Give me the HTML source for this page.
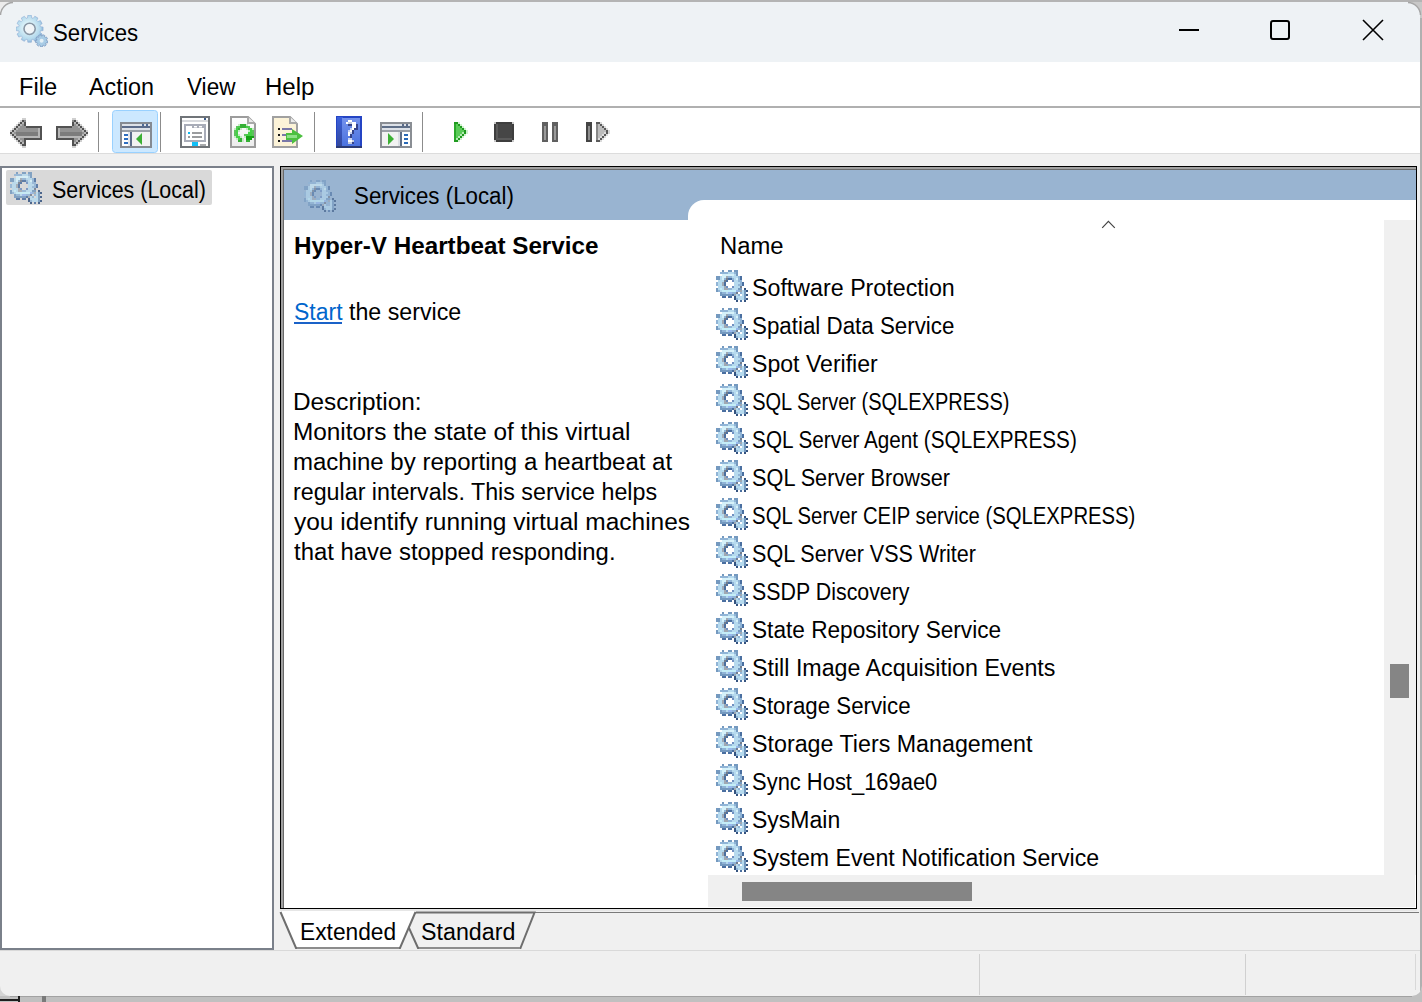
<!DOCTYPE html>
<html><head><meta charset="utf-8"><title>Services</title>
<style>
html,body{margin:0;padding:0;}
body{width:1422px;height:1002px;overflow:hidden;position:relative;background:#c0c0c0;font-family:"Liberation Sans", sans-serif;}
.t{position:absolute;white-space:nowrap;font-family:"Liberation Sans", sans-serif;}
.ic{position:absolute;display:block;}
.a{position:absolute;}
</style></head><body>
<svg width="0" height="0" style="position:absolute"><defs><symbol id="gear" viewBox="0 0 16 16"><rect x="3" y="0" width="1" height="1" fill="#7499bf"/><rect x="6" y="0" width="2" height="1" fill="#7499bf"/><rect x="9" y="0" width="2" height="1" fill="#7499bf"/><rect x="2" y="1" width="4" height="1" fill="#90b4d6"/><rect x="6" y="1" width="3" height="1" fill="#b6daee"/><rect x="9" y="1" width="1" height="1" fill="#90b4d6"/><rect x="10" y="1" width="1" height="1" fill="#7499bf"/><rect x="3" y="2" width="6" height="1" fill="#d6f2fa"/><rect x="9" y="2" width="1" height="1" fill="#b6daee"/><rect x="10" y="2" width="1" height="1" fill="#7499bf"/><rect x="0" y="3" width="2" height="1" fill="#7499bf"/><rect x="2" y="3" width="1" height="1" fill="#b6daee"/><rect x="3" y="3" width="2" height="1" fill="#d6f2fa"/><rect x="5" y="3" width="1" height="1" fill="#a0a8b2"/><rect x="6" y="3" width="2" height="1" fill="#90b4d6"/><rect x="8" y="3" width="3" height="1" fill="#b6daee"/><rect x="11" y="3" width="1" height="1" fill="#90b4d6"/><rect x="12" y="3" width="1" height="1" fill="#4a6fa0"/><rect x="0" y="4" width="2" height="1" fill="#7499bf"/><rect x="2" y="4" width="1" height="1" fill="#b6daee"/><rect x="3" y="4" width="1" height="1" fill="#d6f2fa"/><rect x="4" y="4" width="1" height="1" fill="#90b4d6"/><rect x="5" y="4" width="1" height="1" fill="#737d8c"/><rect x="6" y="4" width="2" height="1" fill="#4a6fa0"/><rect x="8" y="4" width="1" height="1" fill="#90b4d6"/><rect x="9" y="4" width="1" height="1" fill="#b6daee"/><rect x="10" y="4" width="1" height="1" fill="#d6f2fa"/><rect x="11" y="4" width="1" height="1" fill="#90b4d6"/><rect x="12" y="4" width="1" height="1" fill="#4a6fa0"/><rect x="1" y="5" width="3" height="1" fill="#b6daee"/><rect x="4" y="5" width="1" height="1" fill="#737d8c"/><rect x="5" y="5" width="1" height="1" fill="#4a6fa0"/><rect x="6" y="5" width="2" height="1" fill="#ffffff"/><rect x="8" y="5" width="1" height="1" fill="#6f8fc0"/><rect x="9" y="5" width="2" height="1" fill="#b6daee"/><rect x="11" y="5" width="2" height="1" fill="#90b4d6"/><rect x="0" y="6" width="1" height="1" fill="#90b4d6"/><rect x="1" y="6" width="2" height="1" fill="#b6daee"/><rect x="3" y="6" width="1" height="1" fill="#a0a8b2"/><rect x="4" y="6" width="1" height="1" fill="#4a6fa0"/><rect x="5" y="6" width="4" height="1" fill="#ffffff"/><rect x="9" y="6" width="3" height="1" fill="#b6daee"/><rect x="12" y="6" width="1" height="1" fill="#90b4d6"/><rect x="13" y="6" width="1" height="1" fill="#4a6fa0"/><rect x="0" y="7" width="1" height="1" fill="#90b4d6"/><rect x="1" y="7" width="2" height="1" fill="#b6daee"/><rect x="3" y="7" width="1" height="1" fill="#a0a8b2"/><rect x="4" y="7" width="1" height="1" fill="#4a6fa0"/><rect x="5" y="7" width="4" height="1" fill="#ffffff"/><rect x="9" y="7" width="2" height="1" fill="#b6daee"/><rect x="11" y="7" width="2" height="1" fill="#90b4d6"/><rect x="13" y="7" width="1" height="1" fill="#4a6fa0"/><rect x="1" y="8" width="3" height="1" fill="#b6daee"/><rect x="4" y="8" width="1" height="1" fill="#a0a8b2"/><rect x="5" y="8" width="1" height="1" fill="#6f8fc0"/><rect x="6" y="8" width="2" height="1" fill="#ffffff"/><rect x="8" y="8" width="1" height="1" fill="#6f8fc0"/><rect x="9" y="8" width="3" height="1" fill="#b6daee"/><rect x="12" y="8" width="1" height="1" fill="#737d8c"/><rect x="0" y="9" width="1" height="1" fill="#7499bf"/><rect x="1" y="9" width="1" height="1" fill="#b6daee"/><rect x="2" y="9" width="1" height="1" fill="#c4eef8"/><rect x="3" y="9" width="1" height="1" fill="#b6daee"/><rect x="4" y="9" width="2" height="1" fill="#a0a8b2"/><rect x="6" y="9" width="2" height="1" fill="#90b4d6"/><rect x="8" y="9" width="3" height="1" fill="#b6daee"/><rect x="11" y="9" width="2" height="1" fill="#7499bf"/><rect x="14" y="9" width="1" height="1" fill="#34537f"/><rect x="0" y="10" width="1" height="1" fill="#7499bf"/><rect x="1" y="10" width="1" height="1" fill="#90b4d6"/><rect x="2" y="10" width="1" height="1" fill="#b6daee"/><rect x="3" y="10" width="7" height="1" fill="#c4eef8"/><rect x="10" y="10" width="1" height="1" fill="#98b8ee"/><rect x="11" y="10" width="1" height="1" fill="#90b4d6"/><rect x="12" y="10" width="1" height="1" fill="#a0a8b2"/><rect x="13" y="10" width="1" height="1" fill="#b6daee"/><rect x="14" y="10" width="1" height="1" fill="#7499bf"/><rect x="15" y="10" width="1" height="1" fill="#34537f"/><rect x="2" y="11" width="1" height="1" fill="#7499bf"/><rect x="3" y="11" width="2" height="1" fill="#90b4d6"/><rect x="5" y="11" width="1" height="1" fill="#b6daee"/><rect x="6" y="11" width="2" height="1" fill="#98b8ee"/><rect x="8" y="11" width="2" height="1" fill="#90b4d6"/><rect x="10" y="11" width="1" height="1" fill="#737d8c"/><rect x="11" y="11" width="1" height="1" fill="#ffffff"/><rect x="12" y="11" width="1" height="1" fill="#90b4d6"/><rect x="13" y="11" width="1" height="1" fill="#b6daee"/><rect x="14" y="11" width="1" height="1" fill="#7499bf"/><rect x="2" y="12" width="6" height="1" fill="#7499bf"/><rect x="8" y="12" width="1" height="1" fill="#4a6fa0"/><rect x="9" y="12" width="1" height="1" fill="#a0a8b2"/><rect x="10" y="12" width="1" height="1" fill="#b6daee"/><rect x="11" y="12" width="1" height="1" fill="#90b4d6"/><rect x="12" y="12" width="1" height="1" fill="#ffffff"/><rect x="13" y="12" width="1" height="1" fill="#b6daee"/><rect x="14" y="12" width="1" height="1" fill="#7499bf"/><rect x="15" y="12" width="1" height="1" fill="#34537f"/><rect x="3" y="13" width="2" height="1" fill="#4a6fa0"/><rect x="6" y="13" width="2" height="1" fill="#4a6fa0"/><rect x="9" y="13" width="1" height="1" fill="#34537f"/><rect x="10" y="13" width="4" height="1" fill="#b6daee"/><rect x="14" y="13" width="1" height="1" fill="#7499bf"/><rect x="9" y="14" width="1" height="1" fill="#34537f"/><rect x="10" y="14" width="1" height="1" fill="#90b4d6"/><rect x="11" y="14" width="3" height="1" fill="#b6daee"/><rect x="14" y="14" width="1" height="1" fill="#7499bf"/><rect x="15" y="14" width="1" height="1" fill="#34537f"/><rect x="10" y="15" width="1" height="1" fill="#34537f"/><rect x="12" y="15" width="1" height="1" fill="#4a6fa0"/><rect x="14" y="15" width="1" height="1" fill="#34537f"/></symbol><symbol id="gearT" viewBox="0 0 16 16"><rect x="3" y="0" width="1" height="1" fill="#7499bf"/><rect x="6" y="0" width="2" height="1" fill="#7499bf"/><rect x="9" y="0" width="2" height="1" fill="#7499bf"/><rect x="2" y="1" width="4" height="1" fill="#90b4d6"/><rect x="6" y="1" width="3" height="1" fill="#b6daee"/><rect x="9" y="1" width="1" height="1" fill="#90b4d6"/><rect x="10" y="1" width="1" height="1" fill="#7499bf"/><rect x="3" y="2" width="6" height="1" fill="#d6f2fa"/><rect x="9" y="2" width="1" height="1" fill="#b6daee"/><rect x="10" y="2" width="1" height="1" fill="#7499bf"/><rect x="0" y="3" width="2" height="1" fill="#7499bf"/><rect x="2" y="3" width="1" height="1" fill="#b6daee"/><rect x="3" y="3" width="2" height="1" fill="#d6f2fa"/><rect x="5" y="3" width="1" height="1" fill="#a0a8b2"/><rect x="6" y="3" width="2" height="1" fill="#90b4d6"/><rect x="8" y="3" width="3" height="1" fill="#b6daee"/><rect x="11" y="3" width="1" height="1" fill="#90b4d6"/><rect x="12" y="3" width="1" height="1" fill="#4a6fa0"/><rect x="0" y="4" width="2" height="1" fill="#7499bf"/><rect x="2" y="4" width="1" height="1" fill="#b6daee"/><rect x="3" y="4" width="1" height="1" fill="#d6f2fa"/><rect x="4" y="4" width="1" height="1" fill="#90b4d6"/><rect x="5" y="4" width="1" height="1" fill="#737d8c"/><rect x="6" y="4" width="2" height="1" fill="#4a6fa0"/><rect x="8" y="4" width="1" height="1" fill="#90b4d6"/><rect x="9" y="4" width="1" height="1" fill="#b6daee"/><rect x="10" y="4" width="1" height="1" fill="#d6f2fa"/><rect x="11" y="4" width="1" height="1" fill="#90b4d6"/><rect x="12" y="4" width="1" height="1" fill="#4a6fa0"/><rect x="1" y="5" width="3" height="1" fill="#b6daee"/><rect x="4" y="5" width="1" height="1" fill="#737d8c"/><rect x="5" y="5" width="1" height="1" fill="#4a6fa0"/><rect x="8" y="5" width="1" height="1" fill="#6f8fc0"/><rect x="9" y="5" width="2" height="1" fill="#b6daee"/><rect x="11" y="5" width="2" height="1" fill="#90b4d6"/><rect x="0" y="6" width="1" height="1" fill="#90b4d6"/><rect x="1" y="6" width="2" height="1" fill="#b6daee"/><rect x="3" y="6" width="1" height="1" fill="#a0a8b2"/><rect x="4" y="6" width="1" height="1" fill="#4a6fa0"/><rect x="9" y="6" width="3" height="1" fill="#b6daee"/><rect x="12" y="6" width="1" height="1" fill="#90b4d6"/><rect x="13" y="6" width="1" height="1" fill="#4a6fa0"/><rect x="0" y="7" width="1" height="1" fill="#90b4d6"/><rect x="1" y="7" width="2" height="1" fill="#b6daee"/><rect x="3" y="7" width="1" height="1" fill="#a0a8b2"/><rect x="4" y="7" width="1" height="1" fill="#4a6fa0"/><rect x="9" y="7" width="2" height="1" fill="#b6daee"/><rect x="11" y="7" width="2" height="1" fill="#90b4d6"/><rect x="13" y="7" width="1" height="1" fill="#4a6fa0"/><rect x="1" y="8" width="3" height="1" fill="#b6daee"/><rect x="4" y="8" width="1" height="1" fill="#a0a8b2"/><rect x="5" y="8" width="1" height="1" fill="#6f8fc0"/><rect x="8" y="8" width="1" height="1" fill="#6f8fc0"/><rect x="9" y="8" width="3" height="1" fill="#b6daee"/><rect x="12" y="8" width="1" height="1" fill="#737d8c"/><rect x="0" y="9" width="1" height="1" fill="#7499bf"/><rect x="1" y="9" width="1" height="1" fill="#b6daee"/><rect x="2" y="9" width="1" height="1" fill="#c4eef8"/><rect x="3" y="9" width="1" height="1" fill="#b6daee"/><rect x="4" y="9" width="2" height="1" fill="#a0a8b2"/><rect x="6" y="9" width="2" height="1" fill="#90b4d6"/><rect x="8" y="9" width="3" height="1" fill="#b6daee"/><rect x="11" y="9" width="2" height="1" fill="#7499bf"/><rect x="14" y="9" width="1" height="1" fill="#34537f"/><rect x="0" y="10" width="1" height="1" fill="#7499bf"/><rect x="1" y="10" width="1" height="1" fill="#90b4d6"/><rect x="2" y="10" width="1" height="1" fill="#b6daee"/><rect x="3" y="10" width="7" height="1" fill="#c4eef8"/><rect x="10" y="10" width="1" height="1" fill="#98b8ee"/><rect x="11" y="10" width="1" height="1" fill="#90b4d6"/><rect x="12" y="10" width="1" height="1" fill="#a0a8b2"/><rect x="13" y="10" width="1" height="1" fill="#b6daee"/><rect x="14" y="10" width="1" height="1" fill="#7499bf"/><rect x="15" y="10" width="1" height="1" fill="#34537f"/><rect x="2" y="11" width="1" height="1" fill="#7499bf"/><rect x="3" y="11" width="2" height="1" fill="#90b4d6"/><rect x="5" y="11" width="1" height="1" fill="#b6daee"/><rect x="6" y="11" width="2" height="1" fill="#98b8ee"/><rect x="8" y="11" width="2" height="1" fill="#90b4d6"/><rect x="10" y="11" width="1" height="1" fill="#737d8c"/><rect x="12" y="11" width="1" height="1" fill="#90b4d6"/><rect x="13" y="11" width="1" height="1" fill="#b6daee"/><rect x="14" y="11" width="1" height="1" fill="#7499bf"/><rect x="2" y="12" width="6" height="1" fill="#7499bf"/><rect x="8" y="12" width="1" height="1" fill="#4a6fa0"/><rect x="9" y="12" width="1" height="1" fill="#a0a8b2"/><rect x="10" y="12" width="1" height="1" fill="#b6daee"/><rect x="11" y="12" width="1" height="1" fill="#90b4d6"/><rect x="13" y="12" width="1" height="1" fill="#b6daee"/><rect x="14" y="12" width="1" height="1" fill="#7499bf"/><rect x="15" y="12" width="1" height="1" fill="#34537f"/><rect x="3" y="13" width="2" height="1" fill="#4a6fa0"/><rect x="6" y="13" width="2" height="1" fill="#4a6fa0"/><rect x="9" y="13" width="1" height="1" fill="#34537f"/><rect x="10" y="13" width="4" height="1" fill="#b6daee"/><rect x="14" y="13" width="1" height="1" fill="#7499bf"/><rect x="9" y="14" width="1" height="1" fill="#34537f"/><rect x="10" y="14" width="1" height="1" fill="#90b4d6"/><rect x="11" y="14" width="3" height="1" fill="#b6daee"/><rect x="14" y="14" width="1" height="1" fill="#7499bf"/><rect x="15" y="14" width="1" height="1" fill="#34537f"/><rect x="10" y="15" width="1" height="1" fill="#34537f"/><rect x="12" y="15" width="1" height="1" fill="#4a6fa0"/><rect x="14" y="15" width="1" height="1" fill="#34537f"/></symbol></defs></svg>
<div class="a" style="left:0;top:0;width:1422px;height:2px;background:#b4b4b4"></div>
<div class="a" style="left:0;top:984px;width:14px;height:12px;background:#d4d4d4"></div>
<div class="a" style="left:0;top:999px;width:20px;height:2px;background:#1e1e1e"></div>
<div class="a" style="left:10px;top:996px;width:1402px;height:1px;background:#a2a2a2"></div>
<div class="a" style="left:18px;top:996px;width:2px;height:6px;background:#1e1e1e"></div>
<div class="a" style="left:42px;top:996px;width:4px;height:6px;background:#7a7a7a"></div>
<!-- window -->
<div class="a" style="left:0;top:2px;width:1422px;height:994px;background:#f0f0f0;border-radius:12px 12px 10px 10px;overflow:hidden;">
  <div class="a" style="left:1420px;top:0;width:2px;height:994px;background:#b0b0b0"></div>
</div>
<!-- title bar -->
<div class="a" style="left:0;top:2px;width:16px;height:16px;background:#ececec"></div>
<div class="a" style="left:1405px;top:2px;width:17px;height:16px;background:#c8c8c8"></div>
<div class="a" style="left:0;top:2px;width:1420px;height:60px;background:#eef2f5;border-top-left-radius:12px;border-top-right-radius:12px;"></div>
<svg class="a" style="left:0;top:0" width="1422" height="20"><path d="M0.5,15 A13,13 0 0 1 13,2.5" fill="none" stroke="#a6a6a6" stroke-width="1.5"/><path d="M1408,2.5 A13,13 0 0 1 1420.5,15" fill="none" stroke="#a6a6a6" stroke-width="1.5"/></svg>
<!-- menu -->
<div class="a" style="left:0;top:62px;width:1420px;height:44px;background:#fff"></div>
<div class="a" style="left:0;top:106px;width:1420px;height:2px;background:#b0b0b0"></div>
<!-- toolbar -->
<div class="a" style="left:0;top:108px;width:1420px;height:45px;background:#fff"></div>
<div class="a" style="left:0;top:153px;width:1420px;height:1px;background:#dcdcdc"></div>
<svg class="a" style="left:0;top:0" width="640" height="160" viewBox="0 0 640 160"><defs><linearGradient id="agL" x1="0" y1="0" x2="0" y2="1"><stop offset="0" stop-color="#a4a4a4"/><stop offset=".55" stop-color="#828282"/><stop offset=".8" stop-color="#b8b8b8"/><stop offset="1" stop-color="#9a9a9a"/></linearGradient><linearGradient id="pg" x1="0" y1="0" x2="0" y2="1"><stop offset="0" stop-color="#ffffff"/><stop offset="1" stop-color="#ececec"/></linearGradient><linearGradient id="hb" x1="0" y1="0" x2="1" y2="0"><stop offset="0" stop-color="#3f63d8"/><stop offset="1" stop-color="#2b3f90"/></linearGradient></defs><g shape-rendering="crispEdges"><rect x="22" y="118" width="4" height="2" fill="#cfcfcf"/><rect x="20" y="120" width="2" height="2" fill="#cfcfcf"/><rect x="22" y="120" width="2" height="2" fill="#525252"/><rect x="24" y="120" width="2" height="2" fill="#8a8a8a"/><rect x="18" y="122" width="2" height="2" fill="#cfcfcf"/><rect x="20" y="122" width="2" height="2" fill="#525252"/><rect x="22" y="122" width="2" height="2" fill="#b6b6b6"/><rect x="24" y="122" width="2" height="2" fill="#525252"/><rect x="16" y="124" width="2" height="2" fill="#cfcfcf"/><rect x="18" y="124" width="2" height="2" fill="#525252"/><rect x="20" y="124" width="2" height="2" fill="#b6b6b6"/><rect x="22" y="124" width="2" height="2" fill="#939393"/><rect x="24" y="124" width="2" height="2" fill="#525252"/><rect x="14" y="126" width="2" height="2" fill="#cfcfcf"/><rect x="16" y="126" width="2" height="2" fill="#525252"/><rect x="18" y="126" width="2" height="2" fill="#b6b6b6"/><rect x="20" y="126" width="6" height="2" fill="#939393"/><rect x="26" y="126" width="16" height="2" fill="#525252"/><rect x="12" y="128" width="2" height="2" fill="#cfcfcf"/><rect x="14" y="128" width="2" height="2" fill="#525252"/><rect x="16" y="128" width="2" height="2" fill="#b6b6b6"/><rect x="18" y="128" width="20" height="2" fill="#939393"/><rect x="38" y="128" width="2" height="2" fill="#b6b6b6"/><rect x="40" y="128" width="2" height="2" fill="#525252"/><rect x="10" y="130" width="2" height="2" fill="#cfcfcf"/><rect x="12" y="130" width="2" height="2" fill="#525252"/><rect x="14" y="130" width="2" height="2" fill="#b6b6b6"/><rect x="16" y="130" width="22" height="2" fill="#939393"/><rect x="38" y="130" width="2" height="2" fill="#b6b6b6"/><rect x="40" y="130" width="2" height="2" fill="#525252"/><rect x="10" y="132" width="2" height="2" fill="#525252"/><rect x="12" y="132" width="2" height="2" fill="#b6b6b6"/><rect x="14" y="132" width="2" height="2" fill="#939393"/><rect x="16" y="132" width="22" height="2" fill="#7c7c7c"/><rect x="38" y="132" width="2" height="2" fill="#b6b6b6"/><rect x="40" y="132" width="2" height="2" fill="#525252"/><rect x="10" y="134" width="2" height="2" fill="#cfcfcf"/><rect x="12" y="134" width="2" height="2" fill="#525252"/><rect x="14" y="134" width="2" height="2" fill="#b6b6b6"/><rect x="16" y="134" width="22" height="2" fill="#7c7c7c"/><rect x="38" y="134" width="2" height="2" fill="#b6b6b6"/><rect x="40" y="134" width="2" height="2" fill="#525252"/><rect x="12" y="136" width="2" height="2" fill="#cfcfcf"/><rect x="14" y="136" width="2" height="2" fill="#525252"/><rect x="16" y="136" width="24" height="2" fill="#b6b6b6"/><rect x="40" y="136" width="2" height="2" fill="#525252"/><rect x="14" y="138" width="2" height="2" fill="#cfcfcf"/><rect x="16" y="138" width="2" height="2" fill="#525252"/><rect x="18" y="138" width="2" height="2" fill="#b6b6b6"/><rect x="20" y="138" width="4" height="2" fill="#939393"/><rect x="24" y="138" width="18" height="2" fill="#525252"/><rect x="16" y="140" width="2" height="2" fill="#cfcfcf"/><rect x="18" y="140" width="2" height="2" fill="#525252"/><rect x="20" y="140" width="2" height="2" fill="#b6b6b6"/><rect x="22" y="140" width="2" height="2" fill="#939393"/><rect x="24" y="140" width="2" height="2" fill="#525252"/><rect x="18" y="142" width="2" height="2" fill="#cfcfcf"/><rect x="20" y="142" width="2" height="2" fill="#525252"/><rect x="22" y="142" width="2" height="2" fill="#b6b6b6"/><rect x="24" y="142" width="2" height="2" fill="#525252"/><rect x="20" y="144" width="2" height="2" fill="#cfcfcf"/><rect x="22" y="144" width="4" height="2" fill="#525252"/><rect x="22" y="146" width="4" height="2" fill="#cfcfcf"/><rect x="72" y="118" width="4" height="2" fill="#cfcfcf"/><rect x="72" y="120" width="2" height="2" fill="#8a8a8a"/><rect x="74" y="120" width="2" height="2" fill="#525252"/><rect x="76" y="120" width="2" height="2" fill="#cfcfcf"/><rect x="72" y="122" width="2" height="2" fill="#525252"/><rect x="74" y="122" width="2" height="2" fill="#b6b6b6"/><rect x="76" y="122" width="2" height="2" fill="#525252"/><rect x="78" y="122" width="2" height="2" fill="#cfcfcf"/><rect x="72" y="124" width="2" height="2" fill="#525252"/><rect x="74" y="124" width="2" height="2" fill="#939393"/><rect x="76" y="124" width="2" height="2" fill="#b6b6b6"/><rect x="78" y="124" width="2" height="2" fill="#525252"/><rect x="80" y="124" width="2" height="2" fill="#cfcfcf"/><rect x="56" y="126" width="16" height="2" fill="#525252"/><rect x="72" y="126" width="6" height="2" fill="#939393"/><rect x="78" y="126" width="2" height="2" fill="#b6b6b6"/><rect x="80" y="126" width="2" height="2" fill="#525252"/><rect x="82" y="126" width="2" height="2" fill="#cfcfcf"/><rect x="56" y="128" width="2" height="2" fill="#525252"/><rect x="58" y="128" width="2" height="2" fill="#b6b6b6"/><rect x="60" y="128" width="20" height="2" fill="#939393"/><rect x="80" y="128" width="2" height="2" fill="#b6b6b6"/><rect x="82" y="128" width="2" height="2" fill="#525252"/><rect x="84" y="128" width="2" height="2" fill="#cfcfcf"/><rect x="56" y="130" width="2" height="2" fill="#525252"/><rect x="58" y="130" width="2" height="2" fill="#b6b6b6"/><rect x="60" y="130" width="22" height="2" fill="#939393"/><rect x="82" y="130" width="2" height="2" fill="#b6b6b6"/><rect x="84" y="130" width="2" height="2" fill="#525252"/><rect x="86" y="130" width="2" height="2" fill="#cfcfcf"/><rect x="56" y="132" width="2" height="2" fill="#525252"/><rect x="58" y="132" width="2" height="2" fill="#b6b6b6"/><rect x="60" y="132" width="22" height="2" fill="#7c7c7c"/><rect x="82" y="132" width="2" height="2" fill="#939393"/><rect x="84" y="132" width="2" height="2" fill="#b6b6b6"/><rect x="86" y="132" width="2" height="2" fill="#525252"/><rect x="56" y="134" width="2" height="2" fill="#525252"/><rect x="58" y="134" width="2" height="2" fill="#b6b6b6"/><rect x="60" y="134" width="22" height="2" fill="#7c7c7c"/><rect x="82" y="134" width="2" height="2" fill="#b6b6b6"/><rect x="84" y="134" width="2" height="2" fill="#525252"/><rect x="86" y="134" width="2" height="2" fill="#cfcfcf"/><rect x="56" y="136" width="2" height="2" fill="#525252"/><rect x="58" y="136" width="24" height="2" fill="#b6b6b6"/><rect x="82" y="136" width="2" height="2" fill="#525252"/><rect x="84" y="136" width="2" height="2" fill="#cfcfcf"/><rect x="56" y="138" width="18" height="2" fill="#525252"/><rect x="74" y="138" width="4" height="2" fill="#939393"/><rect x="78" y="138" width="2" height="2" fill="#b6b6b6"/><rect x="80" y="138" width="2" height="2" fill="#525252"/><rect x="82" y="138" width="2" height="2" fill="#cfcfcf"/><rect x="72" y="140" width="2" height="2" fill="#525252"/><rect x="74" y="140" width="2" height="2" fill="#939393"/><rect x="76" y="140" width="2" height="2" fill="#b6b6b6"/><rect x="78" y="140" width="2" height="2" fill="#525252"/><rect x="80" y="140" width="2" height="2" fill="#cfcfcf"/><rect x="72" y="142" width="2" height="2" fill="#525252"/><rect x="74" y="142" width="2" height="2" fill="#b6b6b6"/><rect x="76" y="142" width="2" height="2" fill="#525252"/><rect x="78" y="142" width="2" height="2" fill="#cfcfcf"/><rect x="72" y="144" width="4" height="2" fill="#525252"/><rect x="76" y="144" width="2" height="2" fill="#cfcfcf"/><rect x="72" y="146" width="4" height="2" fill="#cfcfcf"/></g><rect x="98" y="112" width="1" height="40" fill="#8c8c8c"/><rect x="160" y="112" width="1" height="40" fill="#8c8c8c"/><rect x="314" y="112" width="1" height="40" fill="#8c8c8c"/><rect x="422" y="112" width="1" height="40" fill="#8c8c8c"/><rect x="112.5" y="110.5" width="45" height="42" rx="3" fill="#cce8ff" stroke="#99d1ff" stroke-width="1"/><rect x="120" y="122" width="32" height="26" fill="#858a92"/><rect x="122" y="124" width="28" height="2" fill="#dde1e7"/><rect x="142" y="124" width="2" height="2" fill="#4f6a96"/><rect x="146" y="124" width="2" height="2" fill="#4f6a96"/><rect x="122" y="126" width="28" height="2" fill="#5b6b8a"/><rect x="122" y="128" width="28" height="2" fill="#dde1e7"/><rect x="122" y="130" width="28" height="2" fill="#9aa0a8"/><rect x="122" y="132" width="8" height="14" fill="#ffffff"/><rect x="128" y="132" width="2" height="14" fill="#e4e7ec"/><rect x="130" y="132" width="2" height="14" fill="#5b6b8a"/><rect x="132" y="132" width="18" height="14" fill="#f2f2f2"/><rect x="124" y="134" width="4" height="2" fill="#2f6fc0"/><rect x="124" y="138" width="4" height="2" fill="#2f6fc0"/><rect x="124" y="142" width="4" height="2" fill="#2f6fc0"/><polygon points="136,139 142,133 142,145" fill="#3cb034"/><rect x="180" y="116" width="30" height="32" fill="#707478"/><rect x="182" y="118" width="26" height="28" fill="#ffffff"/><rect x="182" y="120" width="26" height="2" fill="#d8dade"/><rect x="204" y="118" width="2" height="2" fill="#3a5a88"/><rect x="184" y="124" width="22" height="18" fill="#a8acb8"/><rect x="186" y="126" width="18" height="14" fill="#ffffff"/><rect x="192" y="125" width="12" height="3" fill="#a8acb8"/><rect x="194" y="126" width="3" height="1.5" fill="#ffffff"/><rect x="199" y="126" width="3" height="1.5" fill="#ffffff"/><rect x="188" y="132" width="2" height="2" fill="#10b8f0"/><rect x="192" y="132" width="10" height="2" fill="#9a9c9e"/><rect x="188" y="136" width="2" height="2" fill="#9a9c9e"/><rect x="192" y="136" width="10" height="2" fill="#9a9c9e"/><rect x="192" y="142" width="6" height="4" fill="#10c0f8"/><rect x="200" y="144" width="6" height="2" fill="#a8aaac"/><path d="M231,117 H248 L255,124 V147 H231 Z" fill="url(#pg)" stroke="#9c9c9c" stroke-width="2"/><path d="M248,117 V123 H255" fill="#e8e8e8" stroke="#a8a8a8" stroke-width="2"/><g shape-rendering="crispEdges"><rect x="238" y="124" width="2" height="2" fill="#c4eac4"/><rect x="240" y="124" width="6" height="2" fill="#36b036"/><rect x="246" y="124" width="2" height="2" fill="#c4eac4"/><rect x="236" y="126" width="2" height="2" fill="#5cc25c"/><rect x="238" y="126" width="2" height="2" fill="#46d046"/><rect x="240" y="126" width="6" height="2" fill="#36b036"/><rect x="246" y="126" width="2" height="2" fill="#46d046"/><rect x="248" y="126" width="2" height="2" fill="#5cc25c"/><rect x="234" y="128" width="2" height="2" fill="#c4eac4"/><rect x="236" y="128" width="2" height="2" fill="#46d046"/><rect x="238" y="128" width="2" height="2" fill="#36b036"/><rect x="240" y="128" width="2" height="2" fill="#c4eac4"/><rect x="246" y="128" width="2" height="2" fill="#c4eac4"/><rect x="248" y="128" width="4" height="2" fill="#46d046"/><rect x="252" y="128" width="2" height="2" fill="#c4eac4"/><rect x="234" y="130" width="2" height="2" fill="#5cc25c"/><rect x="236" y="130" width="2" height="2" fill="#46d046"/><rect x="238" y="130" width="2" height="2" fill="#c4eac4"/><rect x="248" y="130" width="2" height="2" fill="#c4eac4"/><rect x="250" y="130" width="2" height="2" fill="#46d046"/><rect x="252" y="130" width="2" height="2" fill="#5cc25c"/><rect x="234" y="132" width="2" height="2" fill="#5cc25c"/><rect x="236" y="132" width="2" height="2" fill="#46d046"/><rect x="248" y="132" width="4" height="2" fill="#46d046"/><rect x="252" y="132" width="2" height="2" fill="#5cc25c"/><rect x="234" y="134" width="2" height="2" fill="#5cc25c"/><rect x="236" y="134" width="2" height="2" fill="#46d046"/><rect x="238" y="134" width="2" height="2" fill="#c4eac4"/><rect x="244" y="134" width="2" height="2" fill="#5cc25c"/><rect x="246" y="134" width="6" height="2" fill="#46d046"/><rect x="252" y="134" width="2" height="2" fill="#5cc25c"/><rect x="234" y="136" width="2" height="2" fill="#c4eac4"/><rect x="236" y="136" width="4" height="2" fill="#46d046"/><rect x="240" y="136" width="2" height="2" fill="#c4eac4"/><rect x="244" y="136" width="2" height="2" fill="#c4eac4"/><rect x="246" y="136" width="8" height="2" fill="#14a414"/><rect x="236" y="138" width="2" height="2" fill="#c4eac4"/><rect x="238" y="138" width="2" height="2" fill="#46d046"/><rect x="240" y="138" width="2" height="2" fill="#36b036"/><rect x="242" y="138" width="2" height="2" fill="#c4eac4"/><rect x="246" y="138" width="6" height="2" fill="#14a414"/><rect x="238" y="140" width="4" height="2" fill="#36b036"/><rect x="242" y="140" width="2" height="2" fill="#c4eac4"/><rect x="246" y="140" width="4" height="2" fill="#36b036"/></g><path d="M273,117 H290 L297,124 V147 H273 Z" fill="#fcf3d8" stroke="#a0a0a0" stroke-width="2"/><path d="M290,117 V123 H297" fill="#ececec" stroke="#a8a8a8" stroke-width="2"/><rect x="278" y="128" width="2" height="2" fill="#151515"/><rect x="282" y="128" width="10" height="2" fill="#7a78a8"/><rect x="278" y="134" width="2" height="2" fill="#151515"/><rect x="282" y="134" width="10" height="2" fill="#7a78a8"/><rect x="278" y="140" width="2" height="2" fill="#151515"/><rect x="282" y="140" width="10" height="2" fill="#7a78a8"/><polygon points="286,133 292,133 292,129 303,136 292,144 292,140 286,140" fill="#4cc040"/><rect x="287" y="135" width="10" height="3" fill="#8ee088"/><defs><linearGradient id="hp" x1="0" y1="0" x2="0" y2="1"><stop offset="0" stop-color="#7492ec"/><stop offset="1" stop-color="#4a72e0"/></linearGradient><linearGradient id="hs" x1="0" y1="0" x2="0" y2="1"><stop offset="0" stop-color="#3a60dc"/><stop offset="1" stop-color="#34489a"/></linearGradient></defs><rect x="336" y="116" width="26" height="32" fill="#2444c4"/><rect x="337" y="117" width="6" height="30" fill="url(#hs)"/><rect x="342" y="118" width="18" height="28" fill="url(#hp)"/><rect x="336" y="146" width="26" height="2" fill="#2a3a74"/><g shape-rendering="crispEdges"><rect x="348" y="120" width="4" height="2" fill="#ffffff"/><rect x="346" y="122" width="2" height="2" fill="#ffffff"/><rect x="348" y="122" width="4" height="2" fill="#c4cce0"/><rect x="352" y="122" width="4" height="2" fill="#ffffff"/><rect x="348" y="124" width="4" height="2" fill="#34428a"/><rect x="352" y="124" width="4" height="2" fill="#ffffff"/><rect x="356" y="124" width="2" height="2" fill="#34428a"/><rect x="352" y="126" width="4" height="2" fill="#ffffff"/><rect x="356" y="126" width="2" height="2" fill="#34428a"/><rect x="350" y="128" width="2" height="2" fill="#c8d4f4"/><rect x="352" y="128" width="2" height="2" fill="#ffffff"/><rect x="354" y="128" width="4" height="2" fill="#34428a"/><rect x="348" y="130" width="2" height="2" fill="#c8d4f4"/><rect x="350" y="130" width="2" height="2" fill="#ffffff"/><rect x="352" y="130" width="2" height="2" fill="#34428a"/><rect x="348" y="132" width="2" height="2" fill="#ffffff"/><rect x="350" y="132" width="2" height="2" fill="#c8d4f4"/><rect x="352" y="132" width="2" height="2" fill="#34428a"/><rect x="348" y="134" width="2" height="2" fill="#ffffff"/><rect x="350" y="134" width="2" height="2" fill="#34428a"/><rect x="350" y="136" width="2" height="2" fill="#34428a"/><rect x="348" y="138" width="4" height="2" fill="#c8d4f4"/><rect x="348" y="140" width="4" height="2" fill="#ffffff"/><rect x="352" y="140" width="2" height="2" fill="#c4cce0"/><rect x="348" y="142" width="4" height="2" fill="#c4cce0"/><rect x="352" y="142" width="2" height="2" fill="#34428a"/></g><rect x="380" y="122" width="32" height="26" fill="#8a8e94"/><rect x="382" y="124" width="28" height="2" fill="#dde1e7"/><rect x="402" y="124" width="2" height="2" fill="#5a6a88"/><rect x="406" y="124" width="2" height="2" fill="#5a6a88"/><rect x="382" y="126" width="28" height="2" fill="#5f6f88"/><rect x="382" y="128" width="28" height="2" fill="#dde1e7"/><rect x="382" y="130" width="28" height="2" fill="#9ca0a8"/><rect x="382" y="132" width="18" height="14" fill="#f2f2f2"/><rect x="398" y="132" width="2" height="14" fill="#dcdfe4"/><rect x="400" y="132" width="2" height="14" fill="#5f6f88"/><rect x="402" y="132" width="8" height="14" fill="#ffffff"/><rect x="404" y="134" width="4" height="2" fill="#2a6ab8"/><rect x="404" y="138" width="4" height="2" fill="#2a6ab8"/><rect x="404" y="142" width="4" height="2" fill="#2a6ab8"/><polygon points="388,133 394,139 388,145" fill="#3cb034"/><g shape-rendering="crispEdges"><rect x="454" y="122" width="4" height="2" fill="#1f9a1f"/><rect x="458" y="122" width="2" height="2" fill="#cdf2cd"/><rect x="454" y="124" width="2" height="2" fill="#2aa82a"/><rect x="456" y="124" width="2" height="2" fill="#5acb58"/><rect x="458" y="124" width="2" height="2" fill="#1f9a1f"/><rect x="460" y="124" width="2" height="2" fill="#cdf2cd"/><rect x="454" y="126" width="2" height="2" fill="#2aa82a"/><rect x="456" y="126" width="4" height="2" fill="#5acb58"/><rect x="460" y="126" width="2" height="2" fill="#1f9a1f"/><rect x="462" y="126" width="2" height="2" fill="#cdf2cd"/><rect x="454" y="128" width="2" height="2" fill="#2aa82a"/><rect x="456" y="128" width="6" height="2" fill="#5acb58"/><rect x="462" y="128" width="2" height="2" fill="#1f9a1f"/><rect x="464" y="128" width="2" height="2" fill="#cdf2cd"/><rect x="454" y="130" width="2" height="2" fill="#2aa82a"/><rect x="456" y="130" width="8" height="2" fill="#5acb58"/><rect x="464" y="130" width="2" height="2" fill="#1f9a1f"/><rect x="466" y="130" width="2" height="2" fill="#cdf2cd"/><rect x="454" y="132" width="2" height="2" fill="#2aa82a"/><rect x="456" y="132" width="6" height="2" fill="#5acb58"/><rect x="462" y="132" width="2" height="2" fill="#b4eab4"/><rect x="464" y="132" width="2" height="2" fill="#1f9a1f"/><rect x="466" y="132" width="2" height="2" fill="#cdf2cd"/><rect x="454" y="134" width="2" height="2" fill="#2aa82a"/><rect x="456" y="134" width="4" height="2" fill="#5acb58"/><rect x="460" y="134" width="2" height="2" fill="#b4eab4"/><rect x="462" y="134" width="2" height="2" fill="#1f9a1f"/><rect x="464" y="134" width="2" height="2" fill="#cdf2cd"/><rect x="454" y="136" width="2" height="2" fill="#2aa82a"/><rect x="456" y="136" width="2" height="2" fill="#5acb58"/><rect x="458" y="136" width="2" height="2" fill="#b4eab4"/><rect x="460" y="136" width="2" height="2" fill="#1f9a1f"/><rect x="462" y="136" width="2" height="2" fill="#cdf2cd"/><rect x="454" y="138" width="2" height="2" fill="#2aa82a"/><rect x="456" y="138" width="2" height="2" fill="#b4eab4"/><rect x="458" y="138" width="2" height="2" fill="#1f9a1f"/><rect x="460" y="138" width="2" height="2" fill="#cdf2cd"/><rect x="454" y="140" width="4" height="2" fill="#1f9a1f"/><rect x="458" y="140" width="2" height="2" fill="#cdf2cd"/><rect x="596" y="122" width="4" height="2" fill="#5a5a5a"/><rect x="600" y="122" width="2" height="2" fill="#dadada"/><rect x="596" y="124" width="2" height="2" fill="#888888"/><rect x="598" y="124" width="2" height="2" fill="#bcbcbc"/><rect x="600" y="124" width="2" height="2" fill="#5a5a5a"/><rect x="602" y="124" width="2" height="2" fill="#dadada"/><rect x="596" y="126" width="2" height="2" fill="#888888"/><rect x="598" y="126" width="4" height="2" fill="#bcbcbc"/><rect x="602" y="126" width="2" height="2" fill="#5a5a5a"/><rect x="604" y="126" width="2" height="2" fill="#dadada"/><rect x="596" y="128" width="2" height="2" fill="#888888"/><rect x="598" y="128" width="6" height="2" fill="#bcbcbc"/><rect x="604" y="128" width="2" height="2" fill="#5a5a5a"/><rect x="606" y="128" width="2" height="2" fill="#dadada"/><rect x="596" y="130" width="2" height="2" fill="#888888"/><rect x="598" y="130" width="8" height="2" fill="#bcbcbc"/><rect x="606" y="130" width="2" height="2" fill="#5a5a5a"/><rect x="608" y="130" width="2" height="2" fill="#dadada"/><rect x="596" y="132" width="2" height="2" fill="#888888"/><rect x="598" y="132" width="6" height="2" fill="#bcbcbc"/><rect x="604" y="132" width="2" height="2" fill="#dcdcdc"/><rect x="606" y="132" width="2" height="2" fill="#5a5a5a"/><rect x="608" y="132" width="2" height="2" fill="#dadada"/><rect x="596" y="134" width="2" height="2" fill="#888888"/><rect x="598" y="134" width="4" height="2" fill="#bcbcbc"/><rect x="602" y="134" width="2" height="2" fill="#dcdcdc"/><rect x="604" y="134" width="2" height="2" fill="#5a5a5a"/><rect x="606" y="134" width="2" height="2" fill="#dadada"/><rect x="596" y="136" width="2" height="2" fill="#888888"/><rect x="598" y="136" width="2" height="2" fill="#bcbcbc"/><rect x="600" y="136" width="2" height="2" fill="#dcdcdc"/><rect x="602" y="136" width="2" height="2" fill="#5a5a5a"/><rect x="604" y="136" width="2" height="2" fill="#dadada"/><rect x="596" y="138" width="2" height="2" fill="#888888"/><rect x="598" y="138" width="2" height="2" fill="#dcdcdc"/><rect x="600" y="138" width="2" height="2" fill="#5a5a5a"/><rect x="602" y="138" width="2" height="2" fill="#dadada"/><rect x="596" y="140" width="4" height="2" fill="#5a5a5a"/><rect x="600" y="140" width="2" height="2" fill="#dadada"/></g><rect x="494" y="122" width="20" height="20" fill="#3e3e3e"/><rect x="494" y="122" width="2" height="2" fill="#c8c8c8"/><rect x="512" y="122" width="2" height="2" fill="#c8c8c8"/><rect x="494" y="140" width="2" height="2" fill="#c8c8c8"/><rect x="512" y="140" width="2" height="2" fill="#c8c8c8"/><rect x="496" y="124" width="16" height="16" fill="#5a5a5a"/><rect x="498" y="124" width="14" height="14" fill="#464646"/><rect x="542" y="122" width="6" height="20" fill="#606060"/><rect x="544" y="126" width="2" height="14" fill="#9a9a9a"/><rect x="552" y="122" width="6" height="20" fill="#606060"/><rect x="554" y="126" width="2" height="14" fill="#9a9a9a"/><rect x="586" y="122" width="6" height="20" fill="#444444"/><rect x="588" y="126" width="2" height="14" fill="#8e8e8e"/></svg>
<!-- left pane -->
<div class="a" style="left:0;top:166px;width:270px;height:780px;background:#fff;border:2px solid #7a808a"></div>
<div class="a" style="left:6px;top:170px;width:206px;height:35px;background:#d9d9d9;border-radius:2px"></div>
<!-- right pane -->
<div class="a" style="left:280px;top:166px;width:1136px;height:742px;background:#000"></div>
<div class="a" style="left:281px;top:167px;width:1135px;height:741px;background:#a0a0a0"></div>
<div class="a" style="left:283px;top:169px;width:1133px;height:739px;background:#696969"></div>
<div class="a" style="left:284px;top:170px;width:1132px;height:738px;background:#fff"></div>
<div class="a" style="left:284px;top:170px;width:1132px;height:30px;background:#99b4d1"></div>
<div class="a" style="left:284px;top:200px;width:420px;height:20px;background:#99b4d1"></div>
<div class="a" style="left:688px;top:200px;width:40px;height:40px;background:#fff;border-top-left-radius:16px"></div>
<div class="a" style="left:1416px;top:166px;width:1px;height:743px;background:#000"></div>
<div class="a" style="left:280px;top:908px;width:1137px;height:1px;background:#000"></div>
<!-- scrollbars -->
<div class="a" style="left:1384px;top:220px;width:32px;height:655px;background:#f0f0f0"></div>
<div class="a" style="left:1390px;top:664px;width:19px;height:34px;background:#858585"></div>
<div class="a" style="left:708px;top:875px;width:707px;height:32px;background:#f0f0f0"></div>
<div class="a" style="left:742px;top:882px;width:230px;height:19px;background:#858585"></div>
<!-- tabs -->
<div class="a" style="left:280px;top:909px;width:1137px;height:2px;background:#e6e6e6"></div>
<div class="a" style="left:530px;top:912px;width:889px;height:1px;background:#7a7a7a"></div>
<svg class="a" style="left:270px;top:905px" width="280" height="50">
  <polygon points="132,7.5 264.5,7.5 250.5,43 148,43" fill="#f0f0f0" stroke="#6e6e6e" stroke-width="2"/>
  <polygon points="10,6 146,6 130,43 26,43" fill="#fff" stroke="none"/>
  <polyline points="10.5,7 26,43 130,43 145.5,7" fill="none" stroke="#6e6e6e" stroke-width="2"/>
  <rect x="27" y="42" width="102" height="2" fill="#8c8c8c"/><rect x="149" y="42" width="101" height="2" fill="#8c8c8c"/>
</svg>
<!-- status bar -->
<div class="a" style="left:0;top:950px;width:1420px;height:1px;background:#d9d9d9"></div>
<div class="a" style="left:979px;top:954px;width:1px;height:41px;background:#d0d0d0"></div>
<div class="a" style="left:1245px;top:954px;width:1px;height:41px;background:#d0d0d0"></div>
<div class="a" style="left:1415px;top:954px;width:1px;height:36px;background:#d8d8d8"></div>
<!-- icons -->
<svg class="ic" style="left:16px;top:15px;width:32px;height:32px" viewBox="0 0 32 32"><defs><radialGradient id="tg" cx=".45" cy=".45" r=".6"><stop offset=".35" stop-color="#d6eef6"/><stop offset=".75" stop-color="#b2d8ec"/><stop offset="1" stop-color="#7fa6d0"/></radialGradient></defs><path d="M11.48,3.01 L11.82,0.32 L15.38,0.32 L15.72,3.01 L17.16,3.39 L18.80,1.24 L21.88,3.01 L20.83,5.51 L21.89,6.57 L24.39,5.52 L26.16,8.60 L24.01,10.24 L24.39,11.68 L27.08,12.02 L27.08,15.58 L24.39,15.92 L24.01,17.36 L26.16,19.00 L24.39,22.08 L21.89,21.03 L20.83,22.09 L21.88,24.59 L18.80,26.36 L17.16,24.21 L15.72,24.59 L15.38,27.28 L11.82,27.28 L11.48,24.59 L10.04,24.21 L8.40,26.36 L5.32,24.59 L6.37,22.09 L5.31,21.03 L2.81,22.08 L1.04,19.00 L3.19,17.36 L2.81,15.92 L0.12,15.58 L0.12,12.02 L2.81,11.68 L3.19,10.24 L1.04,8.60 L2.81,5.52 L5.31,6.57 L6.37,5.51 L5.32,3.01 L8.40,1.24 L10.04,3.39 Z" fill="url(#tg)" stroke="#8aaad4" stroke-width=".8" stroke-opacity=".7"/><circle cx="13.6" cy="13.8" r="5.6" fill="none" stroke="#8a96a4" stroke-width="1.6"/><circle cx="13.6" cy="13.8" r="4.6" fill="#f2f5f7"/><path d="M30.39,25.52 L31.80,25.96 L31.37,28.07 L29.90,27.92 L29.45,28.67 L30.25,29.90 L28.56,31.25 L27.53,30.19 L26.71,30.47 L26.52,31.93 L24.37,31.88 L24.26,30.41 L23.45,30.09 L22.36,31.09 L20.75,29.66 L21.61,28.47 L21.19,27.70 L19.72,27.77 L19.40,25.64 L20.83,25.28 L21.00,24.42 L19.83,23.53 L20.95,21.70 L22.28,22.33 L22.96,21.79 L22.64,20.35 L24.68,19.67 L25.29,21.01 L26.16,21.03 L26.83,19.72 L28.84,20.51 L28.44,21.93 L29.09,22.51 L30.45,21.94 L31.48,23.83 L30.26,24.66 Z" fill="#a8cce6" stroke="#6f90b8" stroke-width=".8" stroke-opacity=".8"/><circle cx="25.6" cy="25.8" r="2" fill="#e4f0f6"/></svg>
<svg class="ic" style="left:10px;top:172px;width:32px;height:32px;opacity:.85" viewBox="0 0 16 16" shape-rendering="crispEdges"><use href="#gearT"/></svg>
<svg class="ic" style="left:304px;top:180px;width:32px;height:32px;opacity:.6" viewBox="0 0 16 16" shape-rendering="crispEdges"><use href="#gearT"/></svg>
<svg class="ic" style="left:716px;top:270px;width:32px;height:32px;" viewBox="0 0 16 16" shape-rendering="crispEdges"><use href="#gear"/></svg><svg class="ic" style="left:716px;top:308px;width:32px;height:32px;" viewBox="0 0 16 16" shape-rendering="crispEdges"><use href="#gear"/></svg><svg class="ic" style="left:716px;top:346px;width:32px;height:32px;" viewBox="0 0 16 16" shape-rendering="crispEdges"><use href="#gear"/></svg><svg class="ic" style="left:716px;top:384px;width:32px;height:32px;" viewBox="0 0 16 16" shape-rendering="crispEdges"><use href="#gear"/></svg><svg class="ic" style="left:716px;top:422px;width:32px;height:32px;" viewBox="0 0 16 16" shape-rendering="crispEdges"><use href="#gear"/></svg><svg class="ic" style="left:716px;top:460px;width:32px;height:32px;" viewBox="0 0 16 16" shape-rendering="crispEdges"><use href="#gear"/></svg><svg class="ic" style="left:716px;top:498px;width:32px;height:32px;" viewBox="0 0 16 16" shape-rendering="crispEdges"><use href="#gear"/></svg><svg class="ic" style="left:716px;top:536px;width:32px;height:32px;" viewBox="0 0 16 16" shape-rendering="crispEdges"><use href="#gear"/></svg><svg class="ic" style="left:716px;top:574px;width:32px;height:32px;" viewBox="0 0 16 16" shape-rendering="crispEdges"><use href="#gear"/></svg><svg class="ic" style="left:716px;top:612px;width:32px;height:32px;" viewBox="0 0 16 16" shape-rendering="crispEdges"><use href="#gear"/></svg><svg class="ic" style="left:716px;top:650px;width:32px;height:32px;" viewBox="0 0 16 16" shape-rendering="crispEdges"><use href="#gear"/></svg><svg class="ic" style="left:716px;top:688px;width:32px;height:32px;" viewBox="0 0 16 16" shape-rendering="crispEdges"><use href="#gear"/></svg><svg class="ic" style="left:716px;top:726px;width:32px;height:32px;" viewBox="0 0 16 16" shape-rendering="crispEdges"><use href="#gear"/></svg><svg class="ic" style="left:716px;top:764px;width:32px;height:32px;" viewBox="0 0 16 16" shape-rendering="crispEdges"><use href="#gear"/></svg><svg class="ic" style="left:716px;top:802px;width:32px;height:32px;" viewBox="0 0 16 16" shape-rendering="crispEdges"><use href="#gear"/></svg><svg class="ic" style="left:716px;top:840px;width:32px;height:32px;" viewBox="0 0 16 16" shape-rendering="crispEdges"><use href="#gear"/></svg>
<!-- sort arrow -->
<svg class="a" style="left:1100px;top:218px" width="18" height="12"><polyline points="2.2,9.8 8.4,3.3 14.8,9.8" fill="none" stroke="#444" stroke-width="1.2"/></svg>
<!-- title buttons -->
<div class="a" style="left:1179px;top:29px;width:20px;height:2px;background:#000"></div>
<div class="a" style="left:1270px;top:20px;width:16px;height:16px;border:2px solid #000;border-radius:3px"></div>
<svg class="a" style="left:1362px;top:19px" width="22" height="22"><path d="M1,1 L21,21 M21,1 L1,21" stroke="#000" stroke-width="1.6"/></svg>
<!-- start underline -->
<div class="a" style="left:294px;top:322px;width:48px;height:2px;background:#1a62c8"></div>
<div class="t" style="left:53.0px;top:22px;font-size:23px;line-height:23px;font-weight:400;color:#000;transform:scaleX(0.9651);transform-origin:1px 0;">Services</div><div class="t" style="left:19.0px;top:76px;font-size:23px;line-height:23px;font-weight:400;color:#000;transform:scaleX(1.0294);transform-origin:2px 0;">File</div><div class="t" style="left:89.0px;top:76px;font-size:23px;line-height:23px;font-weight:400;color:#000;transform:scaleX(1.0159);transform-origin:0px 0;">Action</div><div class="t" style="left:187.0px;top:76px;font-size:23px;line-height:23px;font-weight:400;color:#000;transform:scaleX(0.9796);transform-origin:0px 0;">View</div><div class="t" style="left:265.0px;top:76px;font-size:23px;line-height:23px;font-weight:400;color:#000;transform:scaleX(1.0455);transform-origin:2px 0;">Help</div><div class="t" style="left:52.0px;top:179px;font-size:23px;line-height:23px;font-weight:400;color:#000;transform:scaleX(0.9325);transform-origin:1px 0;">Services (Local)</div><div class="t" style="left:354.0px;top:185px;font-size:23px;line-height:23px;font-weight:400;color:#000;transform:scaleX(0.9693);transform-origin:1px 0;">Services (Local)</div><div class="t" style="left:294.0px;top:234px;font-size:24px;line-height:24px;font-weight:700;color:#000;transform:scaleX(1.0100);transform-origin:2px 0;">Hyper-V Heartbeat Service</div><div class="t" style="left:294.0px;top:301px;font-size:23px;line-height:23px;font-weight:400;color:#0066cc;">Start</div><div class="t" style="left:349.0px;top:301px;font-size:23px;line-height:23px;font-weight:400;color:#000;transform:scaleX(1.0091);transform-origin:0px 0;">the service</div><div class="t" style="left:293.0px;top:391px;font-size:23px;line-height:23px;font-weight:400;color:#000;transform:scaleX(1.0598);transform-origin:2px 0;">Description:</div><div class="t" style="left:293.0px;top:421px;font-size:23px;line-height:23px;font-weight:400;color:#000;transform:scaleX(1.0603);transform-origin:2px 0;">Monitors the state of this virtual</div><div class="t" style="left:293.0px;top:451px;font-size:23px;line-height:23px;font-weight:400;color:#000;transform:scaleX(1.0443);transform-origin:2px 0;">machine by reporting a heartbeat at</div><div class="t" style="left:293.0px;top:481px;font-size:23px;line-height:23px;font-weight:400;color:#000;transform:scaleX(1.0112);transform-origin:2px 0;">regular intervals. This service helps</div><div class="t" style="left:294.0px;top:511px;font-size:23px;line-height:23px;font-weight:400;color:#000;transform:scaleX(1.0647);transform-origin:0px 0;">you identify running virtual machines</div><div class="t" style="left:294.0px;top:541px;font-size:23px;line-height:23px;font-weight:400;color:#000;transform:scaleX(1.0391);transform-origin:0px 0;">that have stopped responding.</div><div class="t" style="left:720.0px;top:235px;font-size:23px;line-height:23px;font-weight:400;color:#000;transform:scaleX(1.0367);transform-origin:2px 0;">Name</div><div class="t" style="left:300.0px;top:921px;font-size:23px;line-height:23px;font-weight:400;color:#000;transform:scaleX(0.9894);transform-origin:2px 0;">Extended</div><div class="t" style="left:421.0px;top:921px;font-size:23px;line-height:23px;font-weight:400;color:#000;transform:scaleX(1.0110);transform-origin:1px 0;">Standard</div><div class="t" style="left:752.0px;top:277px;font-size:23px;line-height:23px;font-weight:400;color:#000;transform:scaleX(1.0101);transform-origin:1px 0;">Software Protection</div><div class="t" style="left:752.0px;top:315px;font-size:23px;line-height:23px;font-weight:400;color:#000;transform:scaleX(0.9709);transform-origin:1px 0;">Spatial Data Service</div><div class="t" style="left:752.0px;top:353px;font-size:23px;line-height:23px;font-weight:400;color:#000;transform:scaleX(1.0040);transform-origin:1px 0;">Spot Verifier</div><div class="t" style="left:752.0px;top:391px;font-size:23px;line-height:23px;font-weight:400;color:#000;transform:scaleX(0.8703);transform-origin:1px 0;">SQL Server (SQLEXPRESS)</div><div class="t" style="left:752.0px;top:429px;font-size:23px;line-height:23px;font-weight:400;color:#000;transform:scaleX(0.8997);transform-origin:1px 0;">SQL Server Agent (SQLEXPRESS)</div><div class="t" style="left:752.0px;top:467px;font-size:23px;line-height:23px;font-weight:400;color:#000;transform:scaleX(0.9426);transform-origin:1px 0;">SQL Server Browser</div><div class="t" style="left:752.0px;top:505px;font-size:23px;line-height:23px;font-weight:400;color:#000;transform:scaleX(0.8819);transform-origin:1px 0;">SQL Server CEIP service (SQLEXPRESS)</div><div class="t" style="left:752.0px;top:543px;font-size:23px;line-height:23px;font-weight:400;color:#000;transform:scaleX(0.9370);transform-origin:1px 0;">SQL Server VSS Writer</div><div class="t" style="left:752.0px;top:581px;font-size:23px;line-height:23px;font-weight:400;color:#000;transform:scaleX(0.9286);transform-origin:1px 0;">SSDP Discovery</div><div class="t" style="left:752.0px;top:619px;font-size:23px;line-height:23px;font-weight:400;color:#000;transform:scaleX(0.9841);transform-origin:1px 0;">State Repository Service</div><div class="t" style="left:752.0px;top:657px;font-size:23px;line-height:23px;font-weight:400;color:#000;transform:scaleX(1.0100);transform-origin:1px 0;">Still Image Acquisition Events</div><div class="t" style="left:752.0px;top:695px;font-size:23px;line-height:23px;font-weight:400;color:#000;transform:scaleX(0.9691);transform-origin:1px 0;">Storage Service</div><div class="t" style="left:752.0px;top:733px;font-size:23px;line-height:23px;font-weight:400;color:#000;transform:scaleX(1.0109);transform-origin:1px 0;">Storage Tiers Management</div><div class="t" style="left:752.0px;top:771px;font-size:23px;line-height:23px;font-weight:400;color:#000;transform:scaleX(0.9531);transform-origin:1px 0;">Sync Host_169ae0</div><div class="t" style="left:752.0px;top:809px;font-size:23px;line-height:23px;font-weight:400;color:#000;">SysMain</div><div class="t" style="left:752.0px;top:847px;font-size:23px;line-height:23px;font-weight:400;color:#000;transform:scaleX(1.0058);transform-origin:1px 0;">System Event Notification Service</div>
</body></html>
